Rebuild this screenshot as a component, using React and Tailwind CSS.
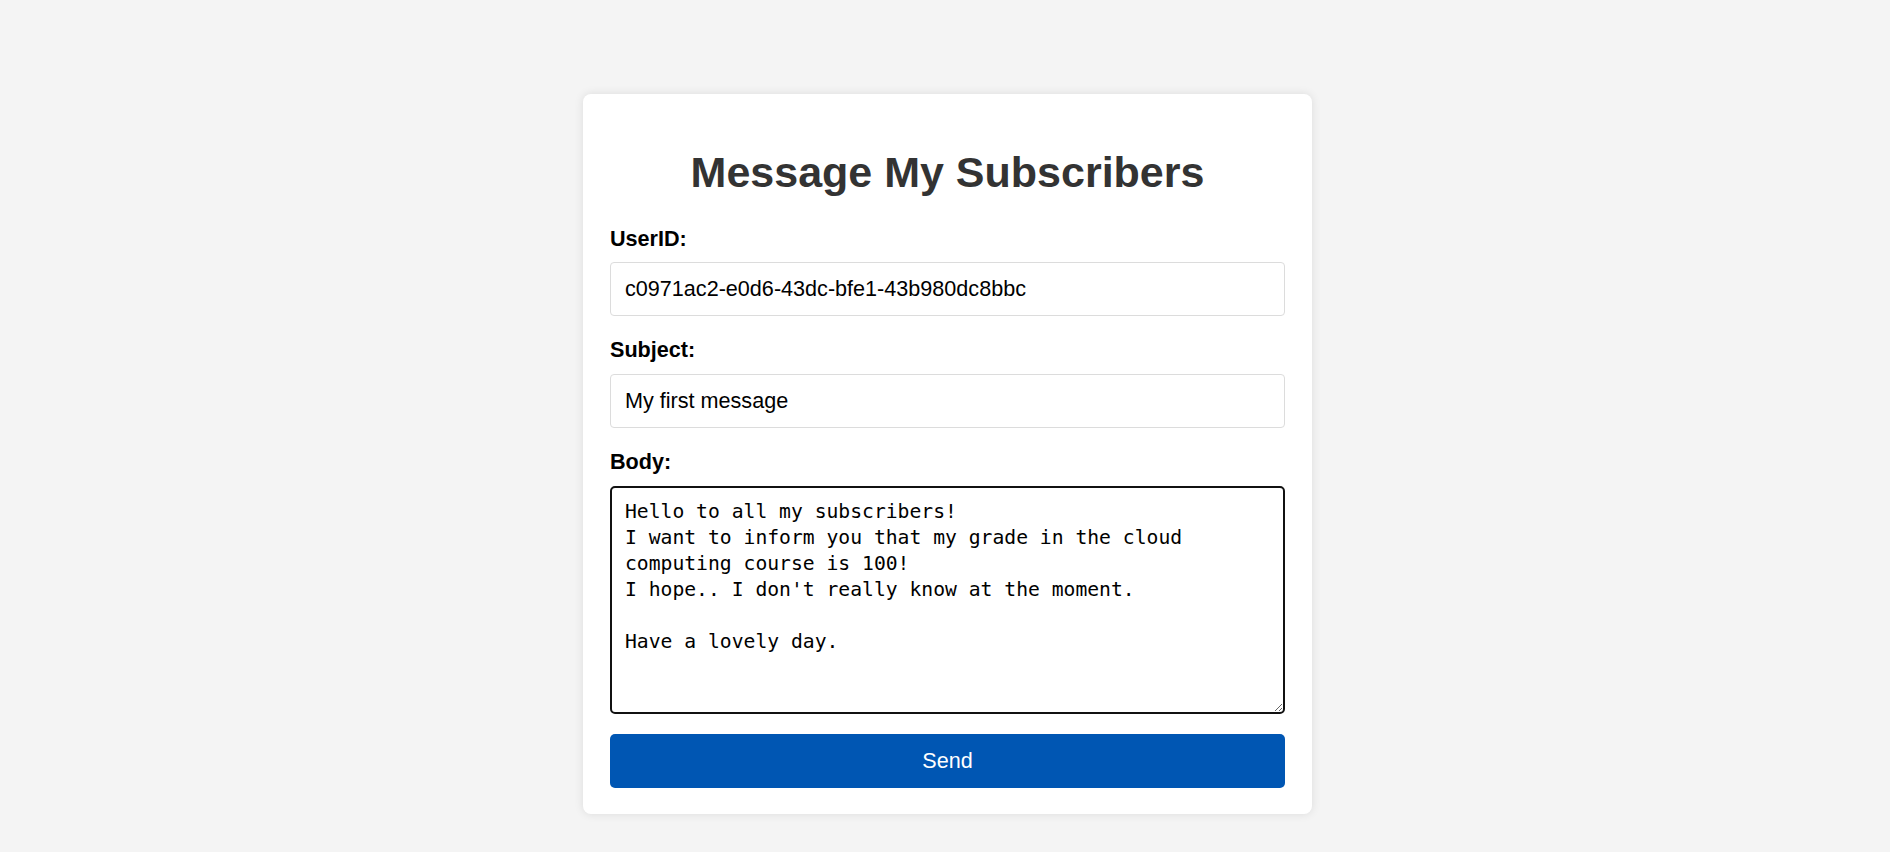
import { useState } from "react";

const BODY_TEXT = `Hello to all my subscribers!
I want to inform you that my grade in the cloud computing course is 100!
I hope.. I don't really know at the moment.

Have a lovely day.`;

export default function App() {
  const [userId, setUserId] = useState("c0971ac2-e0d6-43dc-bfe1-43b980dc8bbc");
  const [subject, setSubject] = useState("My first message");
  const [body, setBody] = useState(BODY_TEXT);

  return (
    <div className="min-h-screen bg-[#f4f4f4] flex justify-center pl-[5px] pt-[94px] font-['Liberation_Sans',Arial,sans-serif]">
      <div className="w-[729px] h-fit bg-white rounded-[8px] shadow-[0_0_10px_rgba(0,0,0,0.1)] pt-[27px] px-[27px] pb-[26px]">
        <h1 className="mt-[26px] mb-[29px] h-[50px] leading-[50px] text-center text-[43px] font-bold text-[#333]">
          Message My Subscribers
        </h1>

        <form onSubmit={(e) => e.preventDefault()} className="flex flex-col">
          <label className="block text-[21.6px] leading-[25px] font-bold text-black mb-[11px]">UserID:</label>
          <input
            type="text"
            value={userId}
            onChange={(e) => setUserId(e.target.value)}
            className="h-[54px] w-full px-[14px] border border-[#dcdcdc] rounded-[4px] text-[21.6px] text-black outline-none mb-[21px]"
          />

          <label className="block text-[21.6px] leading-[25px] font-bold text-black mb-[12px]">Subject:</label>
          <input
            type="text"
            value={subject}
            onChange={(e) => setSubject(e.target.value)}
            className="h-[54px] w-full px-[14px] border border-[#dcdcdc] rounded-[4px] text-[21.6px] text-black outline-none mb-[21px]"
          />

          <label className="block text-[21.6px] leading-[25px] font-bold text-black mb-[12px]">Body:</label>
          <textarea
            value={body}
            onChange={(e) => setBody(e.target.value)}
            className="h-[228px] w-full px-[13px] pt-[11px] border-2 border-[#111] rounded-[5px] font-['DejaVu_Sans_Mono',monospace] text-[19.7px] leading-[26px] text-black outline-none resize mb-[20px]"
          />

          <button
            type="submit"
            className="h-[54px] w-full rounded-[5px] bg-[#0056b3] text-white text-[21.6px]"
          >
            Send
          </button>
        </form>
      </div>
    </div>
  );
}
